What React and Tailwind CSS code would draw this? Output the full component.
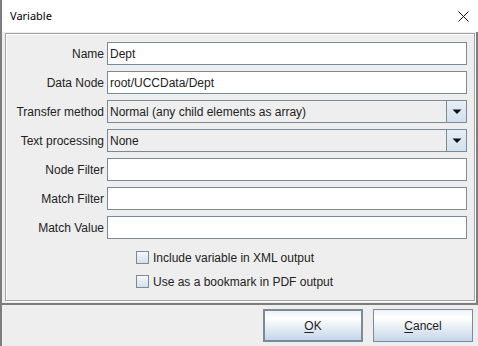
import React from "react";

const field = "h-[23px] w-[360px] border border-[#7a8a99] bg-white px-[2px] flex items-center text-[12px] text-[#222]";

function TextRow({ label, value }) {
    return (
        <div className="flex items-center h-[23px]">
            <div className="w-[98px] text-right text-[12px] text-[#222]">{label}</div>
            <div className={`ml-[3px] ${field}`}>{value}</div>
        </div>
    );
}

function ComboRow({ label, value }) {
    return (
        <div className="flex items-center h-[23px]">
            <div className="w-[98px] text-right text-[12px] text-[#222]">{label}</div>
            <div className="ml-[3px] h-[23px] w-[360px] border border-[#7a8a99] bg-[#eeeeee] flex text-[12px] text-[#222]">
                <div className="flex-1 flex items-center pl-[2px]">{value}</div>
                <div className="w-[20px] border-l border-[#7a8a99] bg-[linear-gradient(to_bottom,#e6eef6,#d3e0ed)] flex items-center justify-center">
                    <svg width="10" height="5" viewBox="0 0 10 5">
                        <path d="M0.5 0.5 L9.5 0.5 L5 5 Z" fill="#111" />
                    </svg>
                </div>
            </div>
        </div>
    );
}

function Check({ label }) {
    return (
        <div className="flex items-center h-[23px] pl-[130px]">
            <div className="w-[13px] h-[13px] border border-[#7a8a99] bg-[linear-gradient(to_bottom,#f4f7fa,#d6e0ea)]" />
            <span className="ml-[4px] text-[12px] text-[#222]">{label}</span>
        </div>
    );
}

export default function App() {
    return (
        <div className="w-[478px] h-[346px] bg-[#eeeeee] border-l-2 border-[#7d7d7d] flex flex-col overflow-hidden" style={{ fontFamily: '"Liberation Sans", Arial, sans-serif' }}>

            {/* Title bar */}
            <div className="h-[32px] bg-white flex items-center justify-between pl-[8px] pr-[8px] shrink-0">
                <span className="text-[11px] text-black" style={{ fontFamily: '"Noto Sans", sans-serif' }}>Variable</span>
                <svg width="11" height="11" viewBox="0 0 11 11" className="mr-[1px]">
                    <path d="M0.5 0.5 L10.5 10.5 M10.5 0.5 L0.5 10.5" stroke="#111" strokeWidth="1" />
                </svg>
            </div>

            {/* Content */}
            <div className="h-[273px] border-r-2 border-b-2 border-[#7d7d7d] pt-[1px] pl-[3px] pr-[1px] pb-[2px] shrink-0">
                <div className="h-[268px] border border-[#a3a3a3] shadow-[inset_1px_1px_0_#ffffff,1px_1px_0_#ffffff] pt-[8px] flex flex-col gap-[6px]">
                    <TextRow label="Name" value="Dept" />
                    <TextRow label="Data Node" value="root/UCCData/Dept" />
                    <ComboRow label="Transfer method" value="Normal (any child elements as array)" />
                    <ComboRow label="Text processing" value="None" />
                    <TextRow label="Node Filter" value="" />
                    <TextRow label="Match Filter" value="" />
                    <TextRow label="Match Value" value="" />
                    <div className="mt-[1px] flex flex-col gap-[1px]">
                        <Check label="Include variable in XML output" />
                        <Check label="Use as a bookmark in PDF output" />
                    </div>
                </div>
            </div>

            {/* Buttons */}
            <div className="flex justify-end gap-[10px] pt-[4px] pr-[5px]">
                <button className="w-[100px] h-[33px] border-2 border-[#7a8a99] bg-[linear-gradient(to_bottom,#eef3f8,#ffffff_25%,#c5d6e8)] text-[12px] text-[#222]">
                    <span className="underline underline-offset-2">O</span>K
                </button>
                <button className="w-[100px] h-[33px] border border-[#7a8a99] bg-[linear-gradient(to_bottom,#eef3f8,#ffffff_25%,#c5d6e8)] text-[12px] text-[#222]">
                    <span className="underline underline-offset-2">C</span>ancel
                </button>
            </div>
        </div>
    );
}
